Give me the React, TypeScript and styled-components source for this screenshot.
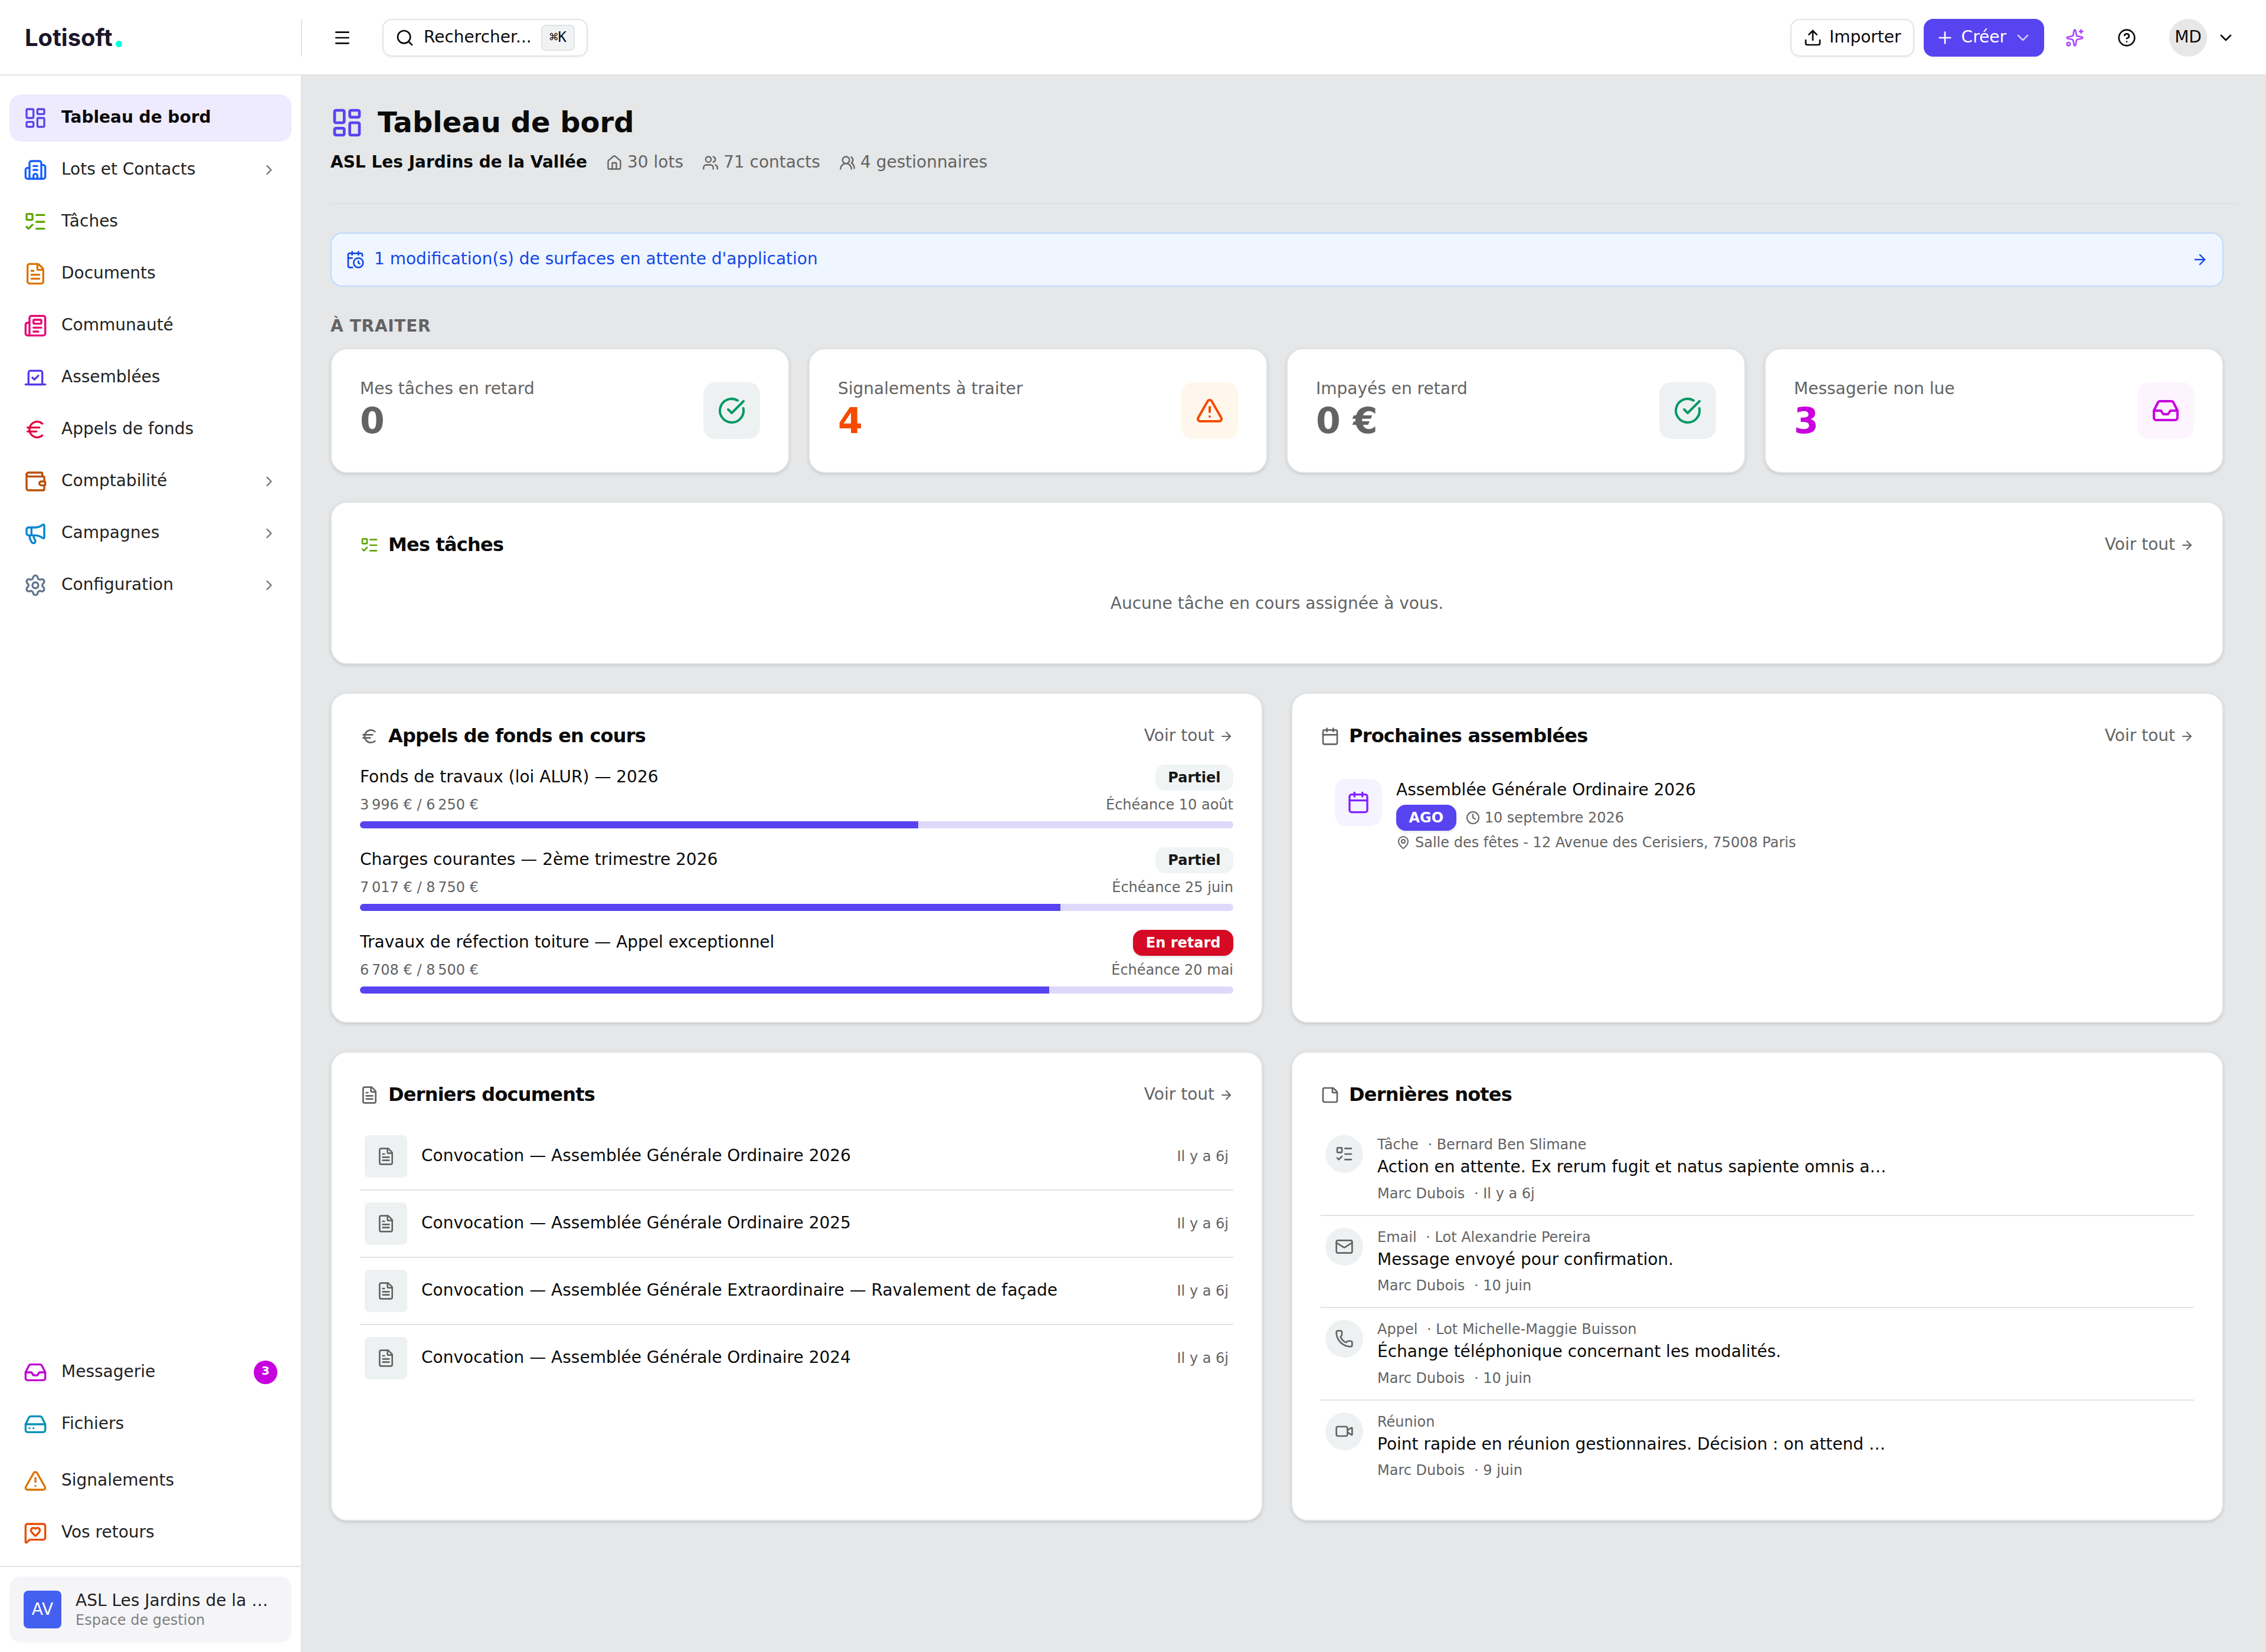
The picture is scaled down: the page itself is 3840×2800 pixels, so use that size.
import type { ReactNode } from 'react';
import styled, { createGlobalStyle, css } from 'styled-components';
import {
  ArrowRight,
  Building2,
  Calendar,
  CalendarClock,
  ChevronDown,
  ChevronRight,
  CircleCheckBig,
  CircleQuestionMark,
  Clock,
  Euro,
  FileText,
  HardDrive,
  House,
  Inbox,
  LayoutDashboard,
  ListTodo,
  Mail,
  MapPin,
  Megaphone,
  Menu,
  MessageSquareHeart,
  Newspaper,
  Phone,
  Plus,
  Search,
  Settings,
  Sparkles,
  StickyNote,
  TriangleAlert,
  Upload,
  Users,
  UsersRound,
  Video,
  Vote,
  Wallet,
  type LucideIcon,
} from 'lucide-react';

const colors = {
  primary: '#5843f1',
  primarySoft: '#ded9fb',
  foreground: '#0a0a0a',
  navText: '#222222',
  muted: '#636363',
  border: '#e1e3e4',
  page: '#e5e7e8',
  tile: '#eef1f2',
  fuchsia: '#c800de',
  orange: '#f54a00',
  emerald: '#009966',
  lime: '#5ea500',
};

// the line box is split so that the glyphs sit slightly above the middle
const textSm = css`
  font-size: 28px;
  line-height: 37px;
  padding-bottom: 3px;
`;

const textXs = css`
  font-size: 24px;
  line-height: 32px;
`;

const cardShadow = css`
  box-shadow: 0 2px 6px rgba(0, 0, 0, 0.1), 0 2px 4px -2px rgba(0, 0, 0, 0.1);
`;

const GlobalStyle = createGlobalStyle`
  * {
    box-sizing: border-box;
    margin: 0;
  }

  body {
    background-color: ${colors.page};
    color: ${colors.foreground};
    font-family: 'DejaVu Sans', sans-serif;
  }

  button {
    font: inherit;
    color: inherit;
    background: none;
    border: none;
    padding: 0;
  }

  svg {
    flex-shrink: 0;
  }
`;

const Layout = {
  Page: styled.div`
    display: flex;
    flex-direction: column;
    width: 3840px;
    height: 2800px;
  `,

  Body: styled.div`
    display: flex;
    flex: 1;
    min-height: 0;
  `,

  Main: styled.main`
    flex: 1;
    padding: 48px;
  `,

  Content: styled.div`
    display: flex;
    flex-direction: column;
    gap: 48px;
    padding: 48px 24px 0 0;
  `,
};

const Header = {
  Bar: styled.header`
    display: flex;
    align-items: center;
    height: 128px;
    padding: 2px 32px 0 0;
    background-color: #fff;
    border-bottom: 2px solid ${colors.border};
  `,

  Brand: styled.div`
    display: flex;
    align-items: center;
    width: 512px;
    height: 64px;
    padding-left: 42px;
    border-right: 2px solid ${colors.border};
  `,

  Logo: styled.span`
    font-family: Inter, sans-serif;
    font-size: 40px;
    font-weight: 700;
    line-height: 48px;
    color: #1a162b;
  `,

  LogoDot: styled.svg`
    margin: 21px 0 0 5px;
  `,

  MenuButton: styled.button`
    display: grid;
    place-items: center;
    width: 64px;
    height: 64px;
    margin: 0 36px;
  `,

  SearchButton: styled.button`
    display: flex;
    align-items: center;
    gap: 16px;
    width: 348px;
    height: 64px;
    padding: 0 20px;
    border: 2px solid ${colors.border};
    border-radius: 16px;
    box-shadow: 0 2px 4px rgba(0, 0, 0, 0.05);
  `,

  Shortcut: styled.kbd`
    margin-left: auto;
    height: 44px;
    padding: 0 12px;
    border: 2px solid ${colors.border};
    border-radius: 8px;
    background-color: #f1f2f4;
    font-family: 'DejaVu Sans Mono', monospace;
    font-size: 24px;
    line-height: 39px;
  `,

  Actions: styled.div`
    display: flex;
    align-items: center;
    gap: 16px;
    margin-left: auto;
  `,

  Button: styled.button<{ $primary?: boolean }>`
    display: flex;
    align-items: center;
    gap: 12px;
    height: 64px;
    padding: 0 20px;
    border: ${({ $primary }) => ($primary ? 'none' : `2px solid ${colors.border}`)};
    border-radius: 16px;
    background-color: ${({ $primary }) => ($primary ? colors.primary : '#fff')};
    color: ${({ $primary }) => ($primary ? '#fff' : colors.foreground)};
    box-shadow: 0 2px 4px rgba(0, 0, 0, 0.05);
  `,

  IconButton: styled.button`
    display: grid;
    place-items: center;
    width: 72px;
    height: 64px;
  `,

  Account: styled.button`
    display: flex;
    align-items: center;
    gap: 16px;
    padding: 0 20px;
  `,

  Avatar: styled.span`
    display: grid;
    place-items: center;
    width: 64px;
    height: 64px;
    border-radius: 50%;
    background-color: #e7e7e7;
  `,

  Label: styled.span`
    ${textSm};
    white-space: nowrap;
  `,
};

const Sidebar = {
  Container: styled.aside`
    display: flex;
    flex-direction: column;
    width: 512px;
    background-color: #fff;
    border-right: 2px solid ${colors.border};
  `,

  Nav: styled.nav`
    display: flex;
    flex-direction: column;
    gap: 8px;
    padding: 32px 16px 0;
  `,

  BottomNav: styled.nav`
    display: flex;
    flex-direction: column;
    gap: 16px;
    margin-top: auto;
    padding: 0 16px 16px;
  `,

  Group: styled.div`
    display: flex;
    flex-direction: column;
    gap: 8px;
  `,

  Item: styled.a<{ $active?: boolean }>`
    display: flex;
    align-items: center;
    gap: 24px;
    height: 80px;
    padding: 0 24px;
    border-radius: 20px;
    color: ${({ $active }) => ($active ? colors.foreground : colors.navText)};
    font-weight: ${({ $active }) => ($active ? 700 : 400)};
    background-color: ${({ $active }) => ($active ? '#eeebfe' : 'transparent')};
  `,

  ItemLabel: styled.span`
    ${textSm};
    flex: 1;
  `,

  Count: styled.span`
    width: 40px;
    height: 40px;
    border-radius: 50%;
    background-color: ${colors.fuchsia};
    color: #fff;
    font-size: 20px;
    font-weight: 700;
    line-height: 35px;
    text-align: center;
  `,

  Footer: styled.div`
    padding: 16px;
    border-top: 2px solid ${colors.border};
  `,

  Workspace: styled.div`
    display: flex;
    align-items: center;
    gap: 24px;
    height: 112px;
    padding: 0 24px;
    border-radius: 20px;
    background-color: #f5f5f8;
  `,

  WorkspaceLogo: styled.div`
    width: 64px;
    height: 64px;
    border-radius: 8px;
    background-color: #4460f0;
    color: #fff;
    font-size: 28px;
    line-height: 64px;
    text-align: center;
  `,

  WorkspaceText: styled.div`
    display: flex;
    flex-direction: column;
    color: ${colors.navText};
  `,

  WorkspaceName: styled.span`
    font-size: 28px;
    line-height: 35px;
    white-space: nowrap;
  `,

  WorkspaceHint: styled.span`
    ${textXs};
    color: #7f7f80;
  `,
};

const PageHeader = {
  Wrapper: styled.div`
    display: flex;
    flex-direction: column;
    gap: 16px;
    padding-bottom: 48px;
    border-bottom: 2px solid #dfe0e2;
  `,

  TitleRow: styled.div`
    display: flex;
    align-items: center;
    gap: 24px;
  `,

  Title: styled.h1`
    font-size: 48px;
    font-weight: 700;
    line-height: 62px;
    padding-bottom: 2px;
  `,

  Meta: styled.div`
    display: flex;
    align-items: center;
    gap: 32px;
    color: ${colors.muted};
  `,

  Name: styled.span`
    ${textSm};
    font-weight: 700;
    color: ${colors.foreground};
  `,

  Stat: styled.span`
    display: flex;
    align-items: center;
    gap: 8px;
  `,

  StatLabel: styled.span`
    ${textSm};
  `,
};

const Banner = {
  Link: styled.a`
    display: flex;
    align-items: center;
    gap: 16px;
    height: 92px;
    padding: 0 24px;
    border: 2px solid #bedbff;
    border-radius: 20px;
    background-color: #eff6ff;
    color: #1447e6;
  `,

  Label: styled.span`
    ${textSm};
    flex: 1;
  `,
};

const Kpi = {
  Section: styled.section`
    display: flex;
    flex-direction: column;
    gap: 16px;
  `,

  Heading: styled.h2`
    ${textSm};
    font-weight: 700;
    letter-spacing: 0.7px;
    text-transform: uppercase;
    color: ${colors.muted};
  `,

  Grid: styled.div`
    display: grid;
    grid-template-columns: repeat(4, 1fr);
    gap: 32px;
  `,

  Label: styled.p`
    ${textSm};
    color: ${colors.muted};
  `,

  Value: styled.p<{ $color: string }>`
    font-size: 60px;
    font-weight: 700;
    line-height: 66px;
    padding-bottom: 6px;
    color: ${({ $color }) => $color};
  `,

  Tile: styled.div<{ $background: string; $color: string }>`
    display: grid;
    place-items: center;
    width: 96px;
    height: 96px;
    border-radius: 20px;
    background-color: ${({ $background }) => $background};
    color: ${({ $color }) => $color};
  `,
};

const Card = {
  Box: styled.section`
    padding: 48px;
    border: 2px solid ${colors.border};
    border-radius: 28px;
    background-color: #fff;
    ${cardShadow};
  `,

  Header: styled.div`
    display: flex;
    align-items: center;
    gap: 16px;
    height: 48px;
    margin-bottom: 24px;
    color: ${colors.muted};
  `,

  Title: styled.h3`
    flex: 1;
    font-size: 32px;
    font-weight: 700;
    line-height: 46px;
    padding-bottom: 2px;
    letter-spacing: -0.8px;
    color: ${colors.foreground};
  `,

  More: styled.a`
    display: flex;
    align-items: center;
    gap: 8px;
  `,

  MoreLabel: styled.span`
    ${textSm};
  `,

  Empty: styled.p`
    padding: 32px 0 35px;
    font-size: 28px;
    line-height: 37px;
    text-align: center;
    color: ${colors.muted};
  `,
};

const KpiCard = styled(Card.Box)`
  display: flex;
  align-items: center;
  justify-content: space-between;
`;

const TwoColumns = styled.div`
  display: grid;
  grid-template-columns: 1fr 1fr;
  gap: 48px;
`;

const Badge = styled.span<{ $variant: 'secondary' | 'destructive' | 'primary' }>`
  ${textXs};
  padding: 6px 21.5px;
  border-radius: 16px;
  font-weight: 700;
  color: ${({ $variant }) => ($variant === 'secondary' ? '#171717' : '#fff')};
  background-color: ${({ $variant }) =>
    ({ secondary: '#f1f4f5', destructive: '#d60a24', primary: colors.primary })[$variant]};
  box-shadow: ${({ $variant }) => ($variant === 'secondary' ? 'none' : '0 2px 4px rgba(0, 0, 0, 0.12)')};
`;

const Fund = {
  List: styled.div`
    display: flex;
    flex-direction: column;
    gap: 32px;
  `,

  Row: styled.div`
    display: flex;
    align-items: center;
    justify-content: space-between;
  `,

  Name: styled.span`
    ${textSm};
  `,

  Detail: styled.div`
    ${textXs};
    display: flex;
    justify-content: space-between;
    margin: 8px 0 12px;
    color: ${colors.muted};
  `,

  Track: styled.div`
    height: 12px;
    border-radius: 6px;
    overflow: hidden;
    background-color: ${colors.primarySoft};
  `,

  Fill: styled.div`
    height: 100%;
    background-color: ${colors.primary};
  `,
};

const Meeting = {
  Item: styled.div`
    display: flex;
    gap: 24px;
    padding: 24px;
  `,

  Tile: styled.div`
    display: grid;
    place-items: center;
    width: 80px;
    height: 80px;
    border-radius: 20px;
    background-color: #f5f3ff;
    color: #7f22fe;
  `,

  Title: styled.p`
    ${textSm};
    margin-bottom: 4px;
  `,

  Line: styled.div`
    ${textXs};
    display: flex;
    align-items: center;
    gap: 16px;
    margin-bottom: 4px;
    color: ${colors.muted};
  `,

  Info: styled.span`
    display: flex;
    align-items: center;
    gap: 8px;
  `,
};

const listRow = css`
  padding: 20px 8px;

  & + & {
    border-top: 2px solid ${colors.border};
  }
`;

const Doc = {
  Row: styled.div`
    display: flex;
    align-items: center;
    gap: 24px;
    ${listRow};
  `,

  Tile: styled.div`
    display: grid;
    place-items: center;
    width: 72px;
    height: 72px;
    border-radius: 8px;
    background-color: ${colors.tile};
    color: ${colors.muted};
  `,

  Name: styled.span`
    ${textSm};
    flex: 1;
  `,

  Date: styled.span`
    ${textXs};
    color: ${colors.muted};
  `,
};

const Note = {
  Row: styled.div`
    display: flex;
    gap: 24px;
    ${listRow};
  `,

  Circle: styled.div`
    display: grid;
    place-items: center;
    width: 64px;
    height: 64px;
    border-radius: 50%;
    background-color: ${colors.tile};
    color: ${colors.muted};
  `,

  Meta: styled.p`
    ${textXs};
    color: ${colors.muted};

    span {
      margin-left: 8px;
    }
  `,

  Message: styled.p`
    margin: 4px 0 8px;
    padding-bottom: 3.5px;
    font-size: 28px;
    line-height: 35px;
  `,
};

type NavEntry = {
  icon: LucideIcon;
  color: string;
  label: string;
  active?: boolean;
  expandable?: boolean;
  count?: number;
};

const mainNav: NavEntry[] = [
  { icon: LayoutDashboard, color: '#5b45e6', label: 'Tableau de bord', active: true },
  { icon: Building2, color: '#155dfc', label: 'Lots et Contacts', expandable: true },
  { icon: ListTodo, color: colors.lime, label: 'Tâches' },
  { icon: FileText, color: '#db7400', label: 'Documents' },
  { icon: Newspaper, color: '#e60076', label: 'Communauté' },
  { icon: Vote, color: '#5639ec', label: 'Assemblées' },
  { icon: Euro, color: '#e3003c', label: 'Appels de fonds' },
  { icon: Wallet, color: '#bb4d00', label: 'Comptabilité', expandable: true },
  { icon: Megaphone, color: '#0084d1', label: 'Campagnes', expandable: true },
  { icon: Settings, color: '#62748e', label: 'Configuration', expandable: true },
];

const toolsNav: NavEntry[] = [
  { icon: Inbox, color: '#c000d4', label: 'Messagerie', count: 3 },
  { icon: HardDrive, color: '#0092b8', label: 'Fichiers' },
];

const supportNav: NavEntry[] = [
  { icon: TriangleAlert, color: '#db7400', label: 'Signalements' },
  { icon: MessageSquareHeart, color: '#ea4b00', label: 'Vos retours' },
];

const stats = [
  { icon: House, label: '30 lots' },
  { icon: Users, label: '71 contacts' },
  { icon: UsersRound, label: '4 gestionnaires' },
];

const kpis = [
  { label: 'Mes tâches en retard', value: '0', color: colors.muted, icon: CircleCheckBig, iconColor: colors.emerald, tile: colors.tile },
  { label: 'Signalements à traiter', value: '4', color: colors.orange, icon: TriangleAlert, iconColor: colors.orange, tile: '#fff7eb' },
  { label: 'Impayés en retard', value: '0 €', color: colors.muted, icon: CircleCheckBig, iconColor: colors.emerald, tile: colors.tile },
  { label: 'Messagerie non lue', value: '3', color: colors.fuchsia, icon: Inbox, iconColor: colors.fuchsia, tile: '#fdf4ff' },
];

const funds = [
  { name: 'Fonds de travaux (loi ALUR) — 2026', paid: 3996, total: 6250, due: 'Échéance 10 août', late: false },
  { name: 'Charges courantes — 2ème trimestre 2026', paid: 7017, total: 8750, due: 'Échéance 25 juin', late: false },
  { name: 'Travaux de réfection toiture — Appel exceptionnel', paid: 6708, total: 8500, due: 'Échéance 20 mai', late: true },
];

const documents = [
  'Convocation — Assemblée Générale Ordinaire 2026',
  'Convocation — Assemblée Générale Ordinaire 2025',
  'Convocation — Assemblée Générale Extraordinaire — Ravalement de façade',
  'Convocation — Assemblée Générale Ordinaire 2024',
];

const notes = [
  { icon: ListTodo, kind: 'Tâche', about: 'Bernard Ben Slimane', message: 'Action en attente. Ex rerum fugit et natus sapiente omnis a…', date: 'Il y a 6j' },
  { icon: Mail, kind: 'Email', about: 'Lot Alexandrie Pereira', message: 'Message envoyé pour confirmation.', date: '10 juin' },
  { icon: Phone, kind: 'Appel', about: 'Lot Michelle-Maggie Buisson', message: 'Échange téléphonique concernant les modalités.', date: '10 juin' },
  { icon: Video, kind: 'Réunion', message: 'Point rapide en réunion gestionnaires. Décision : on attend …', date: '9 juin' },
];

const formatEuros = (amount: number) =>
  `${Math.floor(amount / 1000)}\u202f${String(amount % 1000).padStart(3, '0')}\u00a0€`;

function NavItem({ icon: Icon, color, label, active, expandable, count }: NavEntry) {
  return (
    <Sidebar.Item $active={active}>
      <Icon size={40} color={color} />
      <Sidebar.ItemLabel>{label}</Sidebar.ItemLabel>
      {expandable && <ChevronRight size={28} color="#737373" />}
      {count && <Sidebar.Count>{count}</Sidebar.Count>}
    </Sidebar.Item>
  );
}

type CardHeaderProps = {
  icon: LucideIcon;
  iconColor?: string;
  more?: boolean;
  children: ReactNode;
};

function CardHeader({ icon: Icon, iconColor = colors.muted, more = true, children }: CardHeaderProps) {
  return (
    <Card.Header>
      <Icon size={32} color={iconColor} />
      <Card.Title>{children}</Card.Title>
      {more && (
        <Card.More>
          <Card.MoreLabel>Voir tout</Card.MoreLabel>
          <ArrowRight size={24} />
        </Card.More>
      )}
    </Card.Header>
  );
}

function TopBar() {
  return (
    <Header.Bar>
      <Header.Brand>
        <Header.Logo>Lotisoft</Header.Logo>
        <Header.LogoDot width="11" height="11" viewBox="0 0 11 11">
          <circle cx="5.5" cy="5.5" r="5.5" fill="#00ffdd" />
        </Header.LogoDot>
      </Header.Brand>
      <Header.MenuButton>
        <Menu size={32} />
      </Header.MenuButton>
      <Header.SearchButton>
        <Search size={32} />
        <Header.Label>Rechercher...</Header.Label>
        <Header.Shortcut>⌘K</Header.Shortcut>
      </Header.SearchButton>
      <Header.Actions>
        <Header.Button>
          <Upload size={32} />
          <Header.Label>Importer</Header.Label>
        </Header.Button>
        <Header.Button $primary>
          <Plus size={32} />
          <Header.Label>Créer</Header.Label>
          <ChevronDown size={32} opacity={0.7} />
        </Header.Button>
        <Header.IconButton>
          <Sparkles size={32} color="#ad46ff" />
        </Header.IconButton>
        <Header.IconButton>
          <CircleQuestionMark size={32} />
        </Header.IconButton>
        <Header.Account>
          <Header.Avatar>
            <Header.Label>MD</Header.Label>
          </Header.Avatar>
          <ChevronDown size={32} />
        </Header.Account>
      </Header.Actions>
    </Header.Bar>
  );
}

function SideBar() {
  return (
    <Sidebar.Container>
      <Sidebar.Nav>
        {mainNav.map((entry) => (
          <NavItem key={entry.label} {...entry} />
        ))}
      </Sidebar.Nav>
      <Sidebar.BottomNav>
        <Sidebar.Group>
          {toolsNav.map((entry) => (
            <NavItem key={entry.label} {...entry} />
          ))}
        </Sidebar.Group>
        <Sidebar.Group>
          {supportNav.map((entry) => (
            <NavItem key={entry.label} {...entry} />
          ))}
        </Sidebar.Group>
      </Sidebar.BottomNav>
      <Sidebar.Footer>
        <Sidebar.Workspace>
          <Sidebar.WorkspaceLogo>AV</Sidebar.WorkspaceLogo>
          <Sidebar.WorkspaceText>
            <Sidebar.WorkspaceName>ASL Les Jardins de la …</Sidebar.WorkspaceName>
            <Sidebar.WorkspaceHint>Espace de gestion</Sidebar.WorkspaceHint>
          </Sidebar.WorkspaceText>
        </Sidebar.Workspace>
      </Sidebar.Footer>
    </Sidebar.Container>
  );
}

function Funds() {
  return (
    <Card.Box>
      <CardHeader icon={Euro}>Appels de fonds en cours</CardHeader>
      <Fund.List>
        {funds.map(({ name, paid, total, due, late }) => (
          <div key={name}>
            <Fund.Row>
              <Fund.Name>{name}</Fund.Name>
              <Badge $variant={late ? 'destructive' : 'secondary'}>{late ? 'En retard' : 'Partiel'}</Badge>
            </Fund.Row>
            <Fund.Detail>
              <span>
                {formatEuros(paid)} / {formatEuros(total)}
              </span>
              <span>{due}</span>
            </Fund.Detail>
            <Fund.Track>
              <Fund.Fill style={{ width: `${(paid / total) * 100}%` }} />
            </Fund.Track>
          </div>
        ))}
      </Fund.List>
    </Card.Box>
  );
}

function Meetings() {
  return (
    <Card.Box>
      <CardHeader icon={Calendar}>Prochaines assemblées</CardHeader>
      <Meeting.Item>
        <Meeting.Tile>
          <Calendar size={40} />
        </Meeting.Tile>
        <div>
          <Meeting.Title>Assemblée Générale Ordinaire 2026</Meeting.Title>
          <Meeting.Line>
            <Badge $variant="primary">AGO</Badge>
            <Meeting.Info>
              <Clock size={24} />
              10 septembre 2026
            </Meeting.Info>
          </Meeting.Line>
          <Meeting.Line>
            <Meeting.Info>
              <MapPin size={24} />
              Salle des fêtes - 12 Avenue des Cerisiers, 75008 Paris
            </Meeting.Info>
          </Meeting.Line>
        </div>
      </Meeting.Item>
    </Card.Box>
  );
}

function Documents() {
  return (
    <Card.Box>
      <CardHeader icon={FileText}>Derniers documents</CardHeader>
      {documents.map((name) => (
        <Doc.Row key={name}>
          <Doc.Tile>
            <FileText size={32} />
          </Doc.Tile>
          <Doc.Name>{name}</Doc.Name>
          <Doc.Date>Il y a 6j</Doc.Date>
        </Doc.Row>
      ))}
    </Card.Box>
  );
}

function Notes() {
  return (
    <Card.Box>
      <CardHeader icon={StickyNote} more={false}>
        Dernières notes
      </CardHeader>
      {notes.map(({ icon: Icon, kind, about, message, date }) => (
        <Note.Row key={kind}>
          <Note.Circle>
            <Icon size={32} />
          </Note.Circle>
          <div>
            <Note.Meta>
              {kind} {about && <span>· {about}</span>}
            </Note.Meta>
            <Note.Message>{message}</Note.Message>
            <Note.Meta>
              Marc Dubois <span>· {date}</span>
            </Note.Meta>
          </div>
        </Note.Row>
      ))}
    </Card.Box>
  );
}

export default function App() {
  return (
    <Layout.Page>
      <GlobalStyle />
      <TopBar />
      <Layout.Body>
        <SideBar />
        <Layout.Main>
          <PageHeader.Wrapper>
            <PageHeader.TitleRow>
              <LayoutDashboard size={56} color={colors.primary} />
              <PageHeader.Title>Tableau de bord</PageHeader.Title>
            </PageHeader.TitleRow>
            <PageHeader.Meta>
              <PageHeader.Name>ASL Les Jardins de la Vallée</PageHeader.Name>
              {stats.map(({ icon: Icon, label }) => (
                <PageHeader.Stat key={label}>
                  <Icon size={28} />
                  <PageHeader.StatLabel>{label}</PageHeader.StatLabel>
                </PageHeader.Stat>
              ))}
            </PageHeader.Meta>
          </PageHeader.Wrapper>

          <Layout.Content>
            <Banner.Link>
              <CalendarClock size={32} />
              <Banner.Label>1 modification(s) de surfaces en attente d'application</Banner.Label>
              <ArrowRight size={28} />
            </Banner.Link>

            <Kpi.Section>
              <Kpi.Heading>À traiter</Kpi.Heading>
              <Kpi.Grid>
                {kpis.map(({ label, value, color, icon: Icon, iconColor, tile }) => (
                  <KpiCard key={label}>
                    <div>
                      <Kpi.Label>{label}</Kpi.Label>
                      <Kpi.Value $color={color}>{value}</Kpi.Value>
                    </div>
                    <Kpi.Tile $background={tile} $color={iconColor}>
                      <Icon size={48} />
                    </Kpi.Tile>
                  </KpiCard>
                ))}
              </Kpi.Grid>
            </Kpi.Section>

            <Card.Box>
              <CardHeader icon={ListTodo} iconColor={colors.lime}>
                Mes tâches
              </CardHeader>
              <Card.Empty>Aucune tâche en cours assignée à vous.</Card.Empty>
            </Card.Box>

            <TwoColumns>
              <Funds />
              <Meetings />
            </TwoColumns>

            <TwoColumns>
              <Documents />
              <Notes />
            </TwoColumns>
          </Layout.Content>
        </Layout.Main>
      </Layout.Body>
    </Layout.Page>
  );
}
